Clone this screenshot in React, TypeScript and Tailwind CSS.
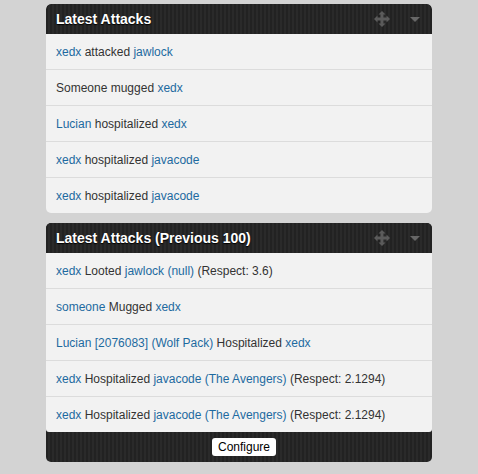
import React from "react";

const L = ({ children }: { children: React.ReactNode }) => (
  <span className="text-[#1d6aa0]">{children}</span>
);

function MoveIcon() {
  return (
    <svg width="16" height="16" viewBox="0 0 16 16" className="block">
      <g fill="#5b5b5b">
        <rect x="6.5" y="2.5" width="3" height="11" />
        <rect x="2.5" y="6.5" width="11" height="3" />
        <polygon points="8,0 4.5,3.5 11.5,3.5" />
        <polygon points="8,16 4.5,12.5 11.5,12.5" />
        <polygon points="0,8 3.5,4.5 3.5,11.5" />
        <polygon points="16,8 12.5,4.5 12.5,11.5" />
      </g>
    </svg>
  );
}

function Tri() {
  return (
    <svg width="10" height="6" viewBox="0 0 10 6" className="block">
      <polygon points="0,0 10,0 5,5" fill="#676767" />
    </svg>
  );
}

const stripes =
  "bg-[repeating-linear-gradient(90deg,#222222_0px,#222222_2px,#2a2a2a_2px,#2a2a2a_4px)]";

function Header({ title }: { title: string }) {
  return (
    <div
      className={`h-[30px] flex items-center rounded-t-[5px] pl-[10px] ${stripes}`}
    >
      <div className="flex-1 text-white font-bold text-[14px] [text-shadow:0_1px_1px_#000]">
        {title}
      </div>
      <div className="mr-[20px]">
        <MoveIcon />
      </div>
      <div className="mr-[12px] mt-[1px]">
        <Tri />
      </div>
    </div>
  );
}

function Row({ children, last }: { children: React.ReactNode; last?: boolean }) {
  return (
    <div
      className={`h-[35px] flex items-center pl-[10px] text-[12px] text-[#333] bg-[#f2f2f2] ${
        last ? "" : "border-b border-[#dcdcdc]"
      } box-content`}
    >
      <div>{children}</div>
    </div>
  );
}

export default function App() {
  return (
    <div
      className="min-h-[474px] w-full bg-[#d3d3d3] pt-[4px] pl-[46px]"
      style={{ fontFamily: '"Liberation Sans", Arial, Helvetica, sans-serif' }}
    >
      <div className="w-[386px]">
        <div className="rounded-[5px] overflow-hidden">
          <Header title="Latest Attacks" />
          <Row>
            <L>xedx</L> attacked <L>jawlock</L>
          </Row>
          <Row>
            Someone mugged <L>xedx</L>
          </Row>
          <Row>
            <L>Lucian</L> hospitalized <L>xedx</L>
          </Row>
          <Row>
            <L>xedx</L> hospitalized <L>javacode</L>
          </Row>
          <Row last>
            <L>xedx</L> hospitalized <L>javacode</L>
          </Row>
        </div>

        <div className={`mt-[10px] rounded-[5px] overflow-hidden ${stripes}`}>
          <Header title="Latest Attacks (Previous 100)" />
          <div className="rounded-b-[3px] overflow-hidden">
            <Row>
              <L>xedx</L> Looted <L>jawlock (null)</L> (Respect: 3.6)
            </Row>
            <Row>
              <L>someone</L> Mugged <L>xedx</L>
            </Row>
            <Row>
              <L>Lucian [2076083] (Wolf Pack)</L> Hospitalized <L>xedx</L>
            </Row>
            <Row>
              <L>xedx</L> Hospitalized <L>javacode (The Avengers)</L> (Respect: 2.1294)
            </Row>
            <Row last>
              <L>xedx</L> Hospitalized <L>javacode (The Avengers)</L> (Respect: 2.1294)
            </Row>
          </div>
          <div className="h-[30px] flex items-center justify-center pl-[10px]">
            <button className="h-[18px] px-[6px] bg-white rounded-[3px] text-[12px] text-black leading-none">
              Configure
            </button>
          </div>
        </div>
      </div>
    </div>
  );
}
